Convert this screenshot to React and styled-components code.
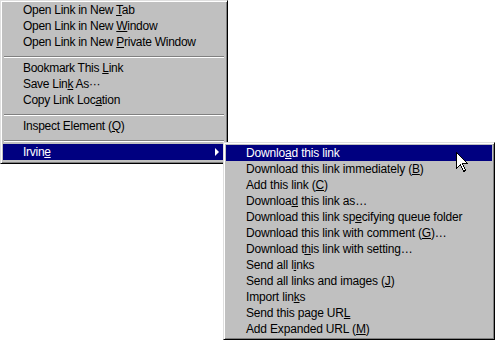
import React from 'react'
import styled, { createGlobalStyle } from 'styled-components'

const GlobalStyle = createGlobalStyle`
    html, body {
        margin: 0;
        padding: 0;
        background: #ffffff;
    }
    body {
        font-family: "Liberation Sans", Arial, sans-serif;
        font-size: 12px;
        -webkit-font-smoothing: none;
    }
`

const Page = styled.div`
    position: relative;
    width: 495px;
    height: 340px;
    overflow: hidden;
    background: #ffffff;
`

const Menu = styled.div`
    box-sizing: border-box;
    width: ${(p) => p.width}px;
    background: #c0c0c0;
    border: 1px solid;
    border-color: #dfdfdf #000000 #000000 #dfdfdf;
    box-shadow: inset 1px 1px #ffffff, inset -1px -1px #808080;
    padding: ${(p) => p.pad};
    display: flex;
    flex-direction: column;
`

const SubMenu = styled(Menu)`
    position: absolute;
    left: 223px;
    top: 142px;
`

const Item = styled.div`
    position: relative;
    display: flex;
    align-items: center;
    height: 16px;
    line-height: 16px;
    padding-left: 20px;
    letter-spacing: ${(p) => p.tight}px;
    color: ${(p) => (p.active ? '#ffffff' : '#000000')};
    background: ${(p) => (p.active ? '#000080' : 'transparent')};
    white-space: nowrap;
`

const Key = styled.span`
    text-decoration: underline;
    text-underline-offset: 1px;
`

const Separator = styled.div`
    height: 0;
    margin: 6px 1px 2px;
    border-top: 1px solid #808080;
    border-bottom: 1px solid #ffffff;
`

const Arrow = styled.span`
    position: absolute;
    right: 6px;
    top: 4px;
    width: 0;
    height: 0;
    border-top: 4px solid transparent;
    border-bottom: 4px solid transparent;
    border-left: 4px solid ${(p) => (p.active ? '#ffffff' : '#000000')};
`

const Cursor = styled.svg`
    position: absolute;
    left: 456px;
    top: 152px;
`

// label with one underlined access key at index k
const Label = ({ text, k }) => (
    <span>
        {text.slice(0, k)}
        <Key>{text[k]}</Key>
        {text.slice(k + 1)}
    </span>
)

const mainGroups = [
    [
        ['Open Link in New Tab', 17],
        ['Open Link in New Window', 17],
        ['Open Link in New Private Window', 17],
    ],
    [
        ['Bookmark This Link', 14],
        ['Save Link As\u00b7\u00b7\u00b7', 8],
        ['Copy Link Location', 13],
    ],
    [['Inspect Element (Q)', 17]],
]

const subItems = [
    ['Download this link', 6],
    ['Download this link immediately (B)', 32],
    ['Add this link (C)', 15],
    ['Download this link as\u2026', 7],
    ['Download this link specifying queue folder', 21],
    ['Download this link with comment (G)\u2026', 33],
    ['Download this link with setting\u2026', 10],
    ['Send all links', 10],
    ['Send all links and images (J)', 27],
    ['Import links', 10],
    ['Send this page URL', 17],
    ['Add Expanded URL (M)', 18],
]

export default function App() {
    return (
        <Page>
            <GlobalStyle />
            <Menu width={228} pad="1px 2px 3px 2px">
                {mainGroups.map((group, gi) => (
                    <React.Fragment key={gi}>
                        {group.map(([text, k]) => (
                            <Item key={text} tight={-0.28}>
                                <Label text={text} k={k} />
                            </Item>
                        ))}
                        <Separator />
                    </React.Fragment>
                ))}
                <Item active tight={-0.28}>
                    <Label text="Irvine" k={5} />
                    <Arrow active />
                </Item>
            </Menu>
            <SubMenu width={272} pad="2px 2px 2px 2px">
                {subItems.map(([text, k], i) => (
                    <Item key={text} active={i === 0} tight={-0.17}>
                        <Label text={text} k={k} />
                    </Item>
                ))}
            </SubMenu>
            <Cursor width="12" height="20" viewBox="0 0 12 20">
                <path
                    d="M0.5 0.5 L0.5 16.5 L4.5 12.5 L7.5 19.5 L9.5 18.5 L6.5 11.5 L11.5 11.5 Z"
                    fill="#ffffff"
                    stroke="#000000"
                    strokeWidth="1"
                    shapeRendering="crispEdges"
                />
            </Cursor>
        </Page>
    )
}
